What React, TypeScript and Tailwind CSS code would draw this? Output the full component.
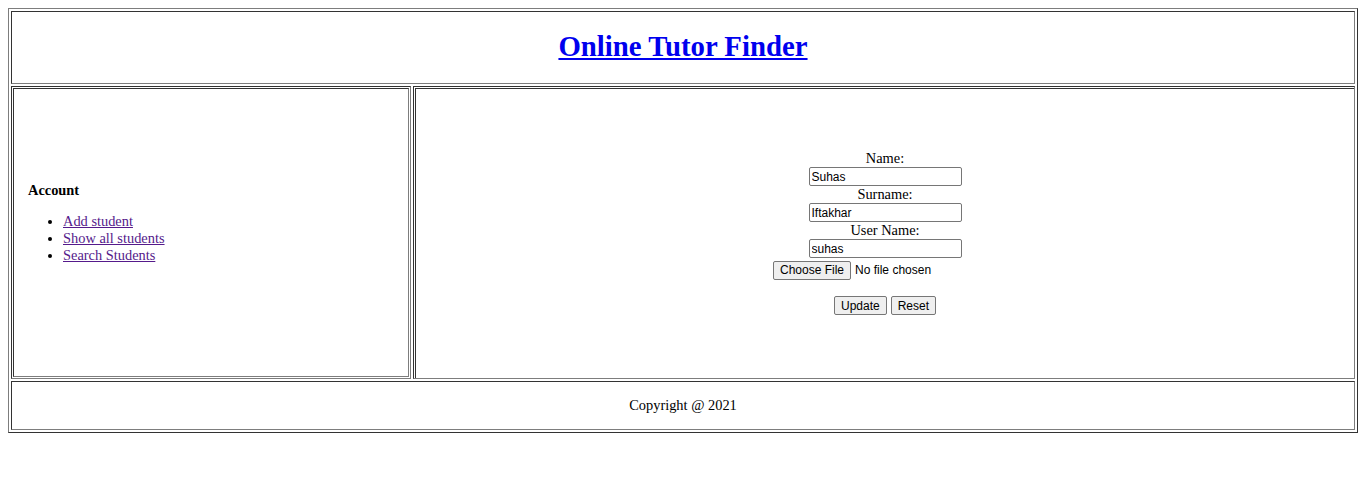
const inset = "border border-t-[#333] border-l-[#333] border-r-[#7d7d7d] border-b-[#7d7d7d]";
const outset = "border border-t-[#7d7d7d] border-l-[#7d7d7d] border-r-[#333] border-b-[#333]";

const Field = ({ label, value }: { label: string; value: string }) => (
  <>
    <div className="leading-[17px]">{label}</div>
    <input
      readOnly
      value={value}
      className="h-[19px] w-[153px] rounded-[2px] border border-[#767676] bg-white px-[2px] font-['Liberation_Sans',Arial,sans-serif] text-[12px] text-black outline-none"
    />
  </>
);

const btn =
  "h-[19px] rounded-[2px] border border-[#767676] bg-[#efefef] px-[6px] font-['Liberation_Sans',Arial,sans-serif] text-[12px] leading-none text-black";

export default function App() {
  return (
    <div className="bg-white p-2 font-['Liberation_Serif','Times_New_Roman',serif] text-[14.4px] text-black">
      <div className={`flex flex-col gap-[2px] p-[2px] ${outset}`}>
        {/* header */}
        <div className={`flex h-[73px] items-center justify-center pb-[2px] ${inset}`}>
          <a href="#" className="text-[28.8px] font-bold text-[#0000ee] underline">
            Online Tutor Finder
          </a>
        </div>

        {/* body */}
        <div className="flex h-[293px] gap-[2px]">
          <div className={`w-[400px] p-[1px] ${inset}`}>
            <div className={`h-full pl-[14px] pt-[93px] ${inset}`}>
              <div className="font-bold leading-[17px]">Account</div>
              <ul className="mt-[14px] list-disc pl-[35px] leading-[17px]">
                <li>
                  <a href="#" className="text-[#551a8b] underline">Add student</a>
                </li>
                <li>
                  <a href="#" className="text-[#551a8b] underline">Show all students</a>
                </li>
                <li>
                  <a href="#" className="text-[#551a8b] underline">Search Students</a>
                </li>
              </ul>
            </div>
          </div>

          <div className={`flex-1 pl-[1px] pt-[1px] ${inset}`}>
            <div className="flex h-full flex-col items-center justify-center border-l border-t border-[#333] pb-[2px]">
              <Field label="Name:" value="Suhas" />
              <Field label="Surname:" value="Iftakhar" />
              <Field label="User Name:" value="suhas" />
              <div className="mt-[2px] flex h-[20px] w-[224px] items-center gap-[4px] font-['Liberation_Sans',Arial,sans-serif] text-[12px]">
                <button className={btn}>Choose File</button>
                <span>No file chosen</span>
              </div>
              <div className="mt-[16px] flex gap-[4px]">
                <button className={btn}>Update</button>
                <button className={btn}>Reset</button>
              </div>
            </div>
          </div>
        </div>

        {/* footer */}
        <div className={`flex h-[49px] items-center justify-center ${inset}`}>
          Copyright @ 2021
        </div>
      </div>
    </div>
  );
}
